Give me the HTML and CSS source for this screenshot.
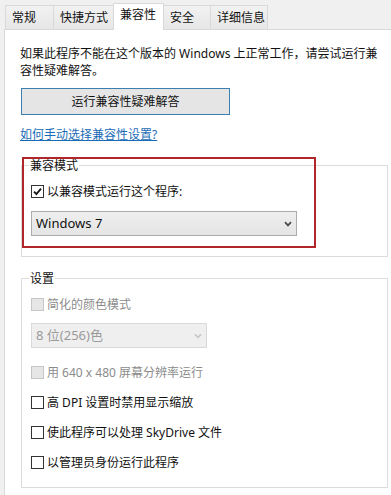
FILE: index.html
```html
<!DOCTYPE html>
<html lang="zh-CN">
<head>
<meta charset="utf-8">
<title>兼容性</title>
<link rel="stylesheet" href="styles.css">
</head>
<body>
<div class="tabs">
  <div class="tab t1">常规</div>
  <div class="tab t2">快捷方式</div>
  <div class="tab t3 active">兼容性</div>
  <div class="tab t4">安全</div>
  <div class="tab t5">详细信息</div>
</div>
<div class="panel">
  <p class="intro">如果此程序不能在这个版本的 Windows 上正常工作，请尝试运行兼<br>容性疑难解答。</p>
  <button class="btn" type="button">运行兼容性疑难解答</button>
  <a class="link" href="#">如何手动选择兼容性设置?</a>

  <div class="compat">
    <fieldset class="group g1">
      <legend>兼容模式</legend>
      <div class="check">
        <span class="box"><svg width="11" height="11" viewBox="0 0 11 11"><path d="M2 5.6 L4.4 8 L9 2.6" fill="none" stroke="#1a1a1a" stroke-width="1.9"/></svg></span>以兼容模式运行这个程序:
      </div>
      <div class="combo c1"><span>Windows 7</span><svg width="8" height="6" viewBox="0 0 8 6"><path d="M1 1.2 L4 4.4 L7 1.2" fill="none" stroke="#4a4a4a" stroke-width="1.7"/></svg></div>
    </fieldset>
    <div class="redbox"></div>
  </div>

  <fieldset class="group g2">
    <legend>设置</legend>
    <div class="check disabled"><span class="box"></span>简化的颜色模式</div>
    <div class="combo c2 disabled"><span>8 位(256)色</span><svg width="8" height="6" viewBox="0 0 8 6"><path d="M1 1.2 L4 4.4 L7 1.2" fill="none" stroke="#c4c4c4" stroke-width="1.5"/></svg></div>
    <div class="check disabled r640"><span class="box"></span>用 640 x 480 屏幕分辨率运行</div>
    <div class="check next"><span class="box"></span>高 DPI 设置时禁用显示缩放</div>
    <div class="check next"><span class="box"></span>使此程序可以处理 SkyDrive 文件</div>
    <div class="check next"><span class="box"></span>以管理员身份运行此程序</div>
  </fieldset>
</div>
</body>
</html>
```

FILE: styles.css
```css
html, body {
  margin: 0;
  padding: 0;
}
body {
  background: #f0f0f0;
  overflow: hidden;
  font-family: "Noto Sans", "Noto Sans CJK SC", sans-serif;
  font-size: 12px;
  line-height: 17px;
  color: #111;
}

/* tabs */
.tabs {
  display: flex;
  align-items: flex-start;
  padding: 3px 0 0 5px;
  height: 27px;
  margin-bottom: -1px;
}
.tab {
  box-sizing: border-box;
  height: 24px;
  margin-top: 2px;
  margin-left: -1px;
  padding: 3px 0 0 6px;
  border: 1px solid #d9d9d9;
  border-bottom: none;
  background: linear-gradient(#f2f2f2, #e6e6e6);
  white-space: nowrap;
}
.t1 { width: 49px; margin-left: 0; }
.t2 { width: 61px; }
.t3 { width: 51px; }
.t4 { width: 48px; }
.t5 { width: 58px; }
.tab.active {
  position: relative;
  z-index: 1;
  height: 27px;
  margin-top: 0;
  padding-top: 2px;
  background: #fff;
}

/* panel */
.panel {
  margin-left: 4px;
  border: 1px solid #d9d9d9;
  border-right: none;
  background: #fff;
  padding: 15px 0 20px 15px;
}
.intro {
  margin: 0;
}
.btn {
  display: block;
  box-sizing: border-box;
  width: 209px;
  height: 27px;
  margin: 9px 0 0 1px;
  padding: 0;
  border: 1px solid #3c7fb1;
  background: #e5e5e5;
  font: inherit;
  line-height: 17px;
  color: #111;
}
.link {
  display: inline-block;
  margin-top: 11px;
  color: #1b6cb6;
  text-decoration: underline;
}

/* group boxes */
.compat {
  position: relative;
  margin: 14px 0 0 1px;
  width: 367px;
}
.group {
  box-sizing: border-box;
  width: 367px;
  min-width: 0;
  margin: 0;
  border: 1px solid #dcdcdc;
  padding: 9px 0 20px 9px;
}
.group legend {
  padding: 0 1px;
  margin-left: -2px;
  line-height: 17px;
}
.g2 {
  margin: 13px 0 0 1px;
  padding-bottom: 16px;
}
.redbox {
  position: absolute;
  left: 1px;
  top: 0;
  width: 294px;
  height: 91px;
  box-sizing: border-box;
  border: 2px solid #b0262b;
  pointer-events: none;
}

/* checkboxes */
.check {
  display: flex;
  align-items: center;
  height: 17px;
  white-space: nowrap;
}
.box {
  flex: none;
  box-sizing: border-box;
  width: 13px;
  height: 13px;
  margin-right: 3px;
  border: 1px solid #333;
  background: #fff;
  display: flex;
  align-items: center;
  justify-content: center;
}
.check.disabled {
  color: #8c8c8c;
}
.check.disabled .box {
  border-color: #c6c6c6;
  background: #e6e6e6;
}
.r640 { margin-top: 16px; }
.next { margin-top: 13px; }

/* combos */
.combo {
  box-sizing: border-box;
  display: flex;
  align-items: center;
  justify-content: space-between;
  height: 25px;
  padding: 0 4px 0 4px;
  border: 1px solid #acacac;
  background: linear-gradient(#efefef, #e4e4e4);
  font-size: 13px;
}
.c1 {
  width: 266px;
  margin-top: 11px;
}
.c2 {
  width: 176px;
  margin-top: 10px;
}
.combo.disabled {
  border-color: #d9d9d9;
  background: #efefef;
  color: #9a9a9a;
}
```
